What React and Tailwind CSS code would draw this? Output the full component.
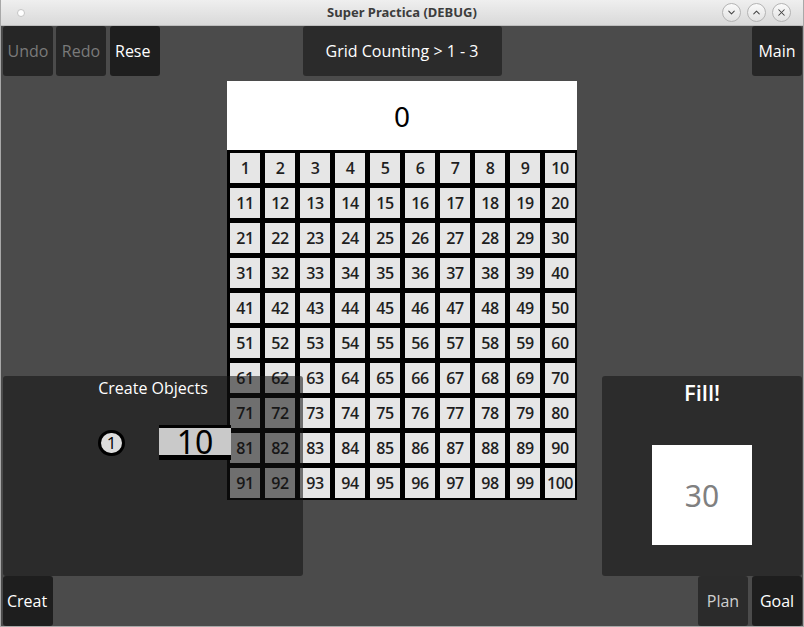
import { ChevronDown, ChevronUp, X } from 'lucide-react';

const cells = Array.from({ length: 100 }, (_, i) => i + 1);

function TopButton({ label, dim, dark, className = '' }) {
  return (
    <div
      className={`h-[50px] w-[50px] rounded-[3px] flex items-center justify-center overflow-hidden whitespace-nowrap text-[16px] ${
        dark ? 'bg-[#1e1e1e]' : 'bg-[#262626]'
      } ${dim ? 'text-[#7a7a7a]' : 'text-white'} ${className}`}
    >
      {label}
    </div>
  );
}

function WinButton({ children }) {
  return (
    <div className="w-[19px] h-[19px] rounded-full border border-[#b4b4b4] bg-gradient-to-b from-[#fafafa] to-[#e2e2e2] flex items-center justify-center text-[#444]">
      {children}
    </div>
  );
}

export default function App() {
  return (
    <div className="w-[804px] h-[627px] flex flex-col bg-[#4b4b4b] border-x border-b border-[#a8a8a8] font-['Open_Sans',sans-serif] overflow-hidden">
      {/* window title bar */}
      <div className="h-[26px] shrink-0 relative flex items-center justify-center bg-gradient-to-b from-[#efefef] to-[#d9d9d9] border-b border-[#bdbdbd]">
        <div className="absolute left-[16px] top-[9px] w-[8px] h-[8px] rounded-full bg-white border border-[#c4c4c4]" />
        <span className="text-[13px] font-bold text-[#3c3c3c] font-['Noto_Sans',sans-serif]">Super Practica (DEBUG)</span>
        <div className="absolute right-[12px] top-[3px] flex gap-[6px]">
          <WinButton><ChevronDown size={11} strokeWidth={2.2} /></WinButton>
          <WinButton><ChevronUp size={11} strokeWidth={2.2} /></WinButton>
          <WinButton><X size={11} strokeWidth={2.2} /></WinButton>
        </div>
      </div>

      {/* app surface */}
      <div className="relative flex-1 flex flex-col px-px">
        {/* top row */}
        <div className="grid grid-cols-[1fr_auto_1fr] h-[50px] shrink-0">
          <div className="flex pl-px">
            <TopButton label="Undo" dim />
            <TopButton label="Redo" dim className="ml-[3px]" />
            <TopButton label="Rese" dark className="ml-[4px] justify-start pl-[5px]" />
          </div>
          <div className="w-[199px] h-[50px] rounded-[3px] bg-[#2b2b2b] text-white text-[16px] flex items-center justify-center">
            Grid Counting &gt; 1 - 3
          </div>
          <div className="flex justify-end">
            <TopButton label="Main" dark className="bg-[#262626]" />
          </div>
        </div>

        {/* centre: counter + hundred grid */}
        <div className="mt-[5px] flex flex-col items-center">
          <div className="w-[350px] h-[69px] bg-white flex items-center justify-center text-[28px] text-black font-['Noto_Sans',sans-serif]">
            0
          </div>
          <div className="w-[350px] h-[350px] bg-black pt-[3px] pl-[3px] grid grid-cols-[repeat(10,30px)] grid-rows-[repeat(10,30px)] gap-[5px]">
            {cells.map((n) => (
              <div
                key={n}
                className="bg-[#e6e6e6] flex items-center justify-center text-[16px] font-semibold text-[#1f1f1f] tracking-[-0.5px]"
              >
                {n}
              </div>
            ))}
          </div>
        </div>

        {/* bottom row */}
        <div className="mt-auto flex justify-between items-end pl-px">
          <div className="h-[50px] w-[50px] rounded-[3px] bg-[#1e1e1e] text-white text-[16px] flex items-center justify-start pl-[4px] overflow-hidden whitespace-nowrap">
            Creat
          </div>
          <div className="flex gap-[4px]">
            <div className="h-[50px] w-[50px] rounded-[3px] bg-[#2b2b2b] text-[#cfcfcf] text-[16px] flex items-center justify-center">
              Plan
            </div>
            <div className="h-[50px] w-[50px] rounded-[3px] bg-[#1e1e1e] text-white text-[16px] flex items-center justify-center">
              Goal
            </div>
          </div>
        </div>

        {/* left panel, overlaps the grid */}
        <div className="absolute left-[2px] top-[350px] w-[300px] h-[200px] rounded-[3px] bg-[rgba(18,18,18,0.56)] flex flex-col">
          <div className="text-center text-white text-[16px]">Create Objects</div>
          <div className="mt-[25px] flex items-center pl-[95px]">
            <div className="w-[27px] h-[26px] rounded-full border-[3px] border-black bg-[#dcdcdc] flex items-center justify-center text-[17px] leading-none text-black">
              1
            </div>
            <div className="ml-[34px] w-[72px] h-[35px] bg-[#c9c9c9] border-t-[3px] border-b-[5px] border-black flex items-center justify-center text-[32px] leading-none text-black font-['Noto_Sans',sans-serif]">
              10
            </div>
          </div>
        </div>

        {/* right panel */}
        <div className="absolute right-px top-[350px] w-[200px] h-[200px] rounded-[3px] bg-[#2c2c2c] flex flex-col items-center">
          <div className="text-white text-[22px] font-semibold">Fill!</div>
          <div className="mt-[36px] w-[100px] h-[100px] bg-white flex items-center justify-center text-[30px] text-[#808080] font-['Noto_Sans',sans-serif]">
            30
          </div>
        </div>
      </div>
    </div>
  );
}
